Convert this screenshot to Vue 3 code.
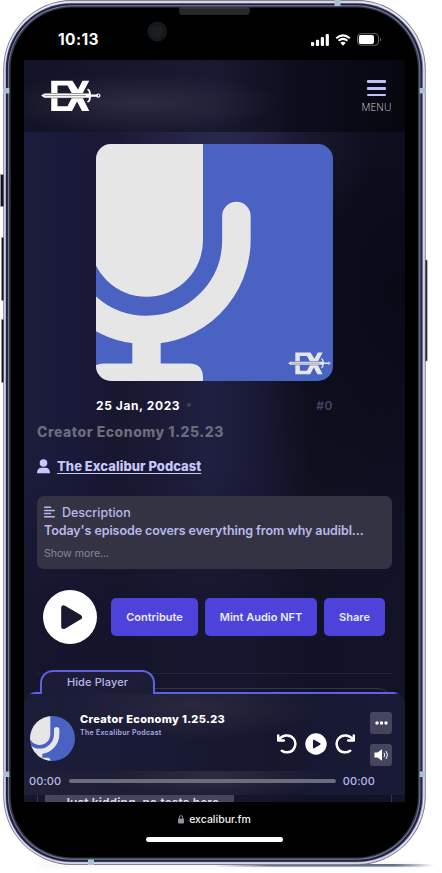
<script setup>
import { h } from 'vue'

const actions = ['Contribute', 'Mint Audio NFT', 'Share']

// Brand mark: block letters crossed by a sword
const BrandMark = () =>
  h('svg', { viewBox: '0 0 60 32' }, [
    h('path', { fill: 'currentColor', d: 'M10.200.7H31.500L37 9.500 41.500.7H48.300L40.500 15.600 48.300 30.900H41L36 21.500 31 30.900H10.200ZM16.500 5.500V26.200H26.500L32 15.600 26.500 5.500Z', 'fill-rule': 'evenodd' }),
    h('path', { class: 'blade', d: 'M0 15.6 4 12.900H43V18.300H4Z' }),
    h('path', { fill: 'currentColor', d: 'M0 15.600 3.500 13.500H50V14.500H57V16.700H50V17.700H3.500Z' }),
    h('path', { class: 'groove', d: 'M4 15.6H45' }),
    h('path', { fill: 'none', stroke: 'currentColor', 'stroke-width': 1.8, d: 'M46.500 9.200Q50 11 48.200 15.6 50 20.2 46.500 22' }),
    h('circle', { cx: 57.3, cy: 15.6, r: 1.6, fill: 'none', stroke: 'currentColor', 'stroke-width': 1.2 }),
  ])

const CoverArt = () =>
  h('svg', { viewBox: '0 0 237 237' }, [
    h('rect', { width: 237, height: 237, fill: '#4a62c2' }),
    h('path', { fill: '#e6e6e6', d: 'M-6-5H107V96.300A56.500 56.500 0 0 1-6 96.300Z' }),
    h('path', { fill: 'none', stroke: '#e6e6e6', 'stroke-width': 28.5, 'stroke-linecap': 'round', d: 'M140.4 72V96A90 90 0 0 1-39.6 96' }),
    h('path', { fill: '#e6e6e6', d: 'M36.3 195H64.7V219.6H93.3Q107 219.6 107 234V240H-6V234Q-6 219.6 8 219.6H36.3Z' }),
  ])
</script>

<template>
  <main class="stage">
    <svg class="chassis" viewBox="0 0 442 873" aria-hidden="true">
      <defs>
        <linearGradient id="ground"><stop offset="0" stop-color="#65708b" stop-opacity="0" /><stop offset=".25" stop-color="#65708b" /><stop offset=".82" stop-color="#65708b" /><stop offset="1" stop-color="#65708b" stop-opacity="0" /></linearGradient>
        <filter id="soft" x="-10%" y="-300%" width="120%" height="700%"><feGaussianBlur stdDeviation=".7" /></filter>
        <filter id="softer" x="-10%" y="-300%" width="120%" height="700%"><feGaussianBlur stdDeviation="2.5" /></filter>
      </defs>
      <rect x="40" y="864" width="380" height="2" fill="#c8cad2" opacity=".5" filter="url(#softer)" />
      <rect x="215" y="864" width="219" height="2.6" fill="url(#ground)" filter="url(#soft)" />
      <g fill="#101519" stroke="#9fa6b0" stroke-width=".7">
        <rect x=".4" y="174.500" width="5" height="32" />
        <rect x="1.400" y="237.500" width="4" height="63" />
        <rect x="1.400" y="319.500" width="4" height="63" />
        <rect x="423" y="260" width="4.200" height="101" />
      </g>
      <rect x="3.300" y="0" width="422.400" height="865" rx="69" fill="#6d6a80" />
      <rect x="4" y=".8" width="421" height="863.500" rx="68" fill="#c3bfcb" />
      <rect x="4.600" y="1.400" width="419.600" height="862" rx="67" fill="#eeeef4" />
      <rect x="5.300" y="2.800" width="418" height="859.800" rx="66.500" fill="#9794a8" />
      <rect x="6" y="3.500" width="416.300" height="858.300" rx="65.500" fill="#201e4c" />
      <rect x="7.900" y="5.200" width="412.500" height="854.600" rx="64" fill="#74839a" />
      <rect x="8.900" y="6.200" width="410.500" height="852.600" rx="63" fill="#343b40" />
      <rect x="10.600" y="7.600" width="407.300" height="849.800" rx="61.500" fill="#000" />
      <path fill="#a9c0d5" d="M3.300 88h6v5.500h-6zM419.700 88h6v5.500h-6zM3.300 771.500h6v5.500h-6zM419.700 771.500h6v5.500h-6zM334.500 0h6v6h-6zM88 859.500h6v5.500h-6z" />
      <path d="M179 7H250V11Q250 15 246 15H183Q179 15 179 11Z" fill="#262929" />
      <path d="M181 8H248" stroke="#414545" />
      <circle cx="157.300" cy="31.500" r="10" fill="#15181b" /><circle cx="157.300" cy="31.500" r="6.500" fill="#1a1e21" />
    </svg>

    <div class="device">
      <div class="status">
        <span class="clock">10:13</span>
        <div class="signals">
          <svg width="18" height="12" viewBox="0 0 18 12" fill="#fff"><rect y="8" width="3.200" height="4" rx="1" /><rect x="4.900" y="5.800" width="3.200" height="6.200" rx="1" /><rect x="9.800" y="3" width="3.200" height="9" rx="1" /><rect x="14.700" width="3.200" height="12" rx="1" /></svg>
          <svg width="16" height="12" viewBox="0 0 16 12"><path d="M1.200 4.200Q8-1.500 14.800 4.200M3.500 6.800Q8 3 12.500 6.800" fill="none" stroke="#fff" stroke-width="2" /><path d="M5.300 8.800Q8 6.600 10.700 8.800L8 11.700Z" fill="#fff" /></svg>
          <svg width="25" height="13" viewBox="0 0 25 13"><rect x=".5" y=".7" width="21" height="11.500" rx="3.300" fill="none" stroke="#68686a" /><rect x="1.800" y="2" width="15.200" height="8.900" rx="2" fill="#fff" /><path d="M23 4.400Q25.300 6.400 23 8.500Z" fill="#68686a" /></svg>
        </div>
      </div>

      <section class="screen">
        <header class="topbar">
          <BrandMark class="brand" />
          <button class="menu"><i></i><i></i><i></i><span>MENU</span></button>
        </header>

        <article class="episode">
          <div class="cover"><CoverArt class="art" /><BrandMark class="stamp" /></div>
          <div class="meta"><b>25 Jan, 2023</b><i class="dot"></i><span class="num">#0</span></div>
          <h1>Creator Economy 1.25.23</h1>
          <div class="author">
            <svg width="13" height="15" viewBox="0 0 13 15" fill="#c7c9fb"><circle cx="6.500" cy="4" r="3.800" /><path d="M0 14.300Q0 8.700 4.500 8.700H8.500Q13 8.700 13 14.300Z" /></svg>
            <a>The Excalibur Podcast</a>
          </div>
          <div class="description">
            <div class="label">
              <svg width="11" height="12" viewBox="0 0 11 12"><path d="M.7 1.200H6.500M.7 4.400H10.300M.7 7.600H6.500M.7 10.800H10.300" stroke="#b9bae8" stroke-width="1.500" stroke-linecap="round" /></svg>
              <span>Description</span>
            </div>
            <p>Today's episode covers everything from why audibl...</p>
            <small>Show more...</small>
          </div>
          <div class="actions">
            <svg class="play" viewBox="0 0 54 54"><circle cx="27" cy="27" r="27" fill="#fff" /><path d="M20.700 17.800V36.600L36.500 27.200Z" fill="#181831" stroke="#181831" stroke-width="5" stroke-linejoin="round" /></svg>
            <button v-for="label in actions" :key="label">{{ label }}</button>
          </div>
          <hr />
          <div class="notes"><p>Just kidding, no tests here</p></div>
        </article>

        <aside class="player">
          <button class="hide">Hide Player</button>
          <div class="panel">
            <CoverArt class="thumb" />
            <div class="track"><strong>Creator Economy 1.25.23</strong><span>The Excalibur Podcast</span></div>
            <div class="controls">
              <svg width="20" height="20" viewBox="0 0 20 20"><path d="M1.200 1.500V6.500H6.800M2 6C5 .8 12.500-.2 16.500 4.500 20.300 9 18 17.300 11 18.300 8.500 18.600 6.300 17.800 4.800 16.700" /></svg>
              <svg width="22" height="22" viewBox="0 0 22 22"><circle cx="11" cy="11" r="10.700" fill="#fff" stroke="none" /><path class="tri" d="M8.800 7.300V14.700L14.800 11Z" /></svg>
              <svg width="20" height="20" viewBox="0 0 20 20"><path d="M18.800 1.500V6.500H13.200M18 6C15 .8 7.500-.2 3.500 4.500-.3 9 2 17.300 9 18.300 11.500 18.600 13.700 17.800 15.200 16.700" /></svg>
            </div>
            <div class="extras">
              <button><svg width="13" height="4" viewBox="0 0 13 4" fill="#fff"><circle cx="2" cy="2" r="1.700" /><circle cx="6.500" cy="2" r="1.700" /><circle cx="11" cy="2" r="1.700" /></svg></button>
              <button><svg width="15" height="12" viewBox="0 0 15 12"><path d="M.5 3.500H3.500L8 .3V11.700L3.500 8.500H.5Z" fill="#fff" /><path d="M10 3.800Q11.500 6 10 8.200M12 2Q15 6 12 10" fill="none" stroke="#fff" /></svg></button>
            </div>
          </div>
          <div class="progress"><span>00:00</span><div class="rail"></div><span>00:00</span></div>
        </aside>
      </section>

      <footer class="address">
        <div class="site"><svg width="6" height="9" viewBox="0 0 6 9"><rect y="3.500" width="6" height="5" rx="1" fill="#929294" /><path d="M1.300 4V2.300Q1.300.7 3 .7T4.700 2.300V4" fill="none" stroke="#929294" /></svg><span>excalibur.fm</span></div>
        <div class="home"></div>
      </footer>
    </div>
  </main>
</template>

<style>
body { background: #fff; }
</style>

<style scoped>
* { box-sizing: border-box; }
.stage { position: relative; width: 442px; height: 873px; overflow: hidden; background: #fff; font-family: Inter, "Liberation Sans", sans-serif; color: #fff; }
.chassis { position: absolute; inset: 0; width: 442px; height: 873px; }
.device { position: relative; width: 381px; margin-left: 24px; display: flex; flex-direction: column; }
button { font-family: inherit; border: 0; padding: 0; color: inherit; }
svg { display: block; flex: none; }

.status { height: 60px; padding: 19px 23px 0 34px; display: flex; align-items: center; justify-content: space-between; }
.clock { font-size: 15.500px; font-weight: 700; letter-spacing: .4px; }
.signals { display: flex; align-items: center; gap: 6px; }

.screen { position: relative; height: 742px; overflow: hidden; background: radial-gradient(ellipse 150px 130px at 205px 70px, rgba(48, 46, 90, .6), rgba(34, 32, 68, 0)), linear-gradient(180deg, rgba(19, 19, 42, 0) 55%, rgba(19, 19, 40, .75) 75%), radial-gradient(ellipse 150px 300px at 375px 230px, rgba(7, 9, 20, .9), rgba(7, 9, 20, 0)), linear-gradient(90deg, #1c1c3b 0, #19193a 12%, #17172f 25%, #1f1f40 48%, #1a1a38 60%, #101120 75%, #111328 100%); }
.topbar { height: 72px; padding: 0 13px 0 17px; display: flex; align-items: flex-start; justify-content: space-between; background: radial-gradient(ellipse 145px 30px at 115px 43px, rgba(56, 54, 72, .65), transparent), linear-gradient(90deg, #131327, #191932 50%, #0d0e1d 70%, #070710); }
.brand { width: 60px; height: 32px; margin-top: 20px; color: #fff; }
:deep(.blade) { fill: #343448; }
:deep(.groove) { stroke: #676776; stroke-width: .7; fill: none; }
.menu { margin-top: 20px; width: 31px; display: flex; flex-direction: column; align-items: center; gap: 4px; background: none; }
.menu i { width: 19px; height: 2.800px; border-radius: 1px; background: #bdc0fb; }
.menu span { font-family: "Open Sans", sans-serif; font-size: 10.300px; font-weight: 300; line-height: 13px; color: #d4d4df; letter-spacing: .2px; margin-top: 1px; }

.episode { padding: 12px 13px 0; }
.cover { position: relative; width: 237px; height: 237px; margin-left: 59px; border-radius: 15px; overflow: hidden; }
.art { width: 237px; height: 237px; }
.stamp { position: absolute; width: 43px; height: 23px; right: 2px; bottom: 6px; color: #e6e6e6; }
.stamp :deep(.blade) { fill: #4a62c2; }
.meta { width: 237px; height: 16px; margin: 16px 0 0 59px; display: flex; align-items: center; font-size: 12px; }
.meta b { font-weight: 700; letter-spacing: .6px; }
.dot { width: 4px; height: 4px; margin-left: 7px; border-radius: 50%; background: #40405a; }
.num { margin-left: auto; font-weight: 600; letter-spacing: .6px; color: #45436a; }
h1 { margin: 9px 0 0; height: 20px; font-size: 14px; line-height: 20px; font-weight: 800; letter-spacing: .52px; color: #6b6c7b; white-space: nowrap; }
.author { height: 20px; margin-top: 14px; display: flex; align-items: center; gap: 7px; }
.author a { font-size: 13px; font-weight: 800; letter-spacing: .04px; color: #c7c9fb; text-decoration: underline; text-underline-offset: 2px; }
.description { height: 73px; margin-top: 20px; padding: 8px 7px; border-radius: 7px; background: #333344; color: #b9bae8; white-space: nowrap; }
.label { height: 16px; display: flex; align-items: center; gap: 7px; font-size: 12.500px; font-weight: 500; }
.description p { margin: 2px 0 0; font-size: 12.500px; line-height: 17px; font-weight: 600; letter-spacing: -.08px; }
.description small { display: block; margin-top: 8px; font-size: 10.700px; line-height: 14px; letter-spacing: -.1px; color: #85859f; }
.actions { height: 54px; margin-top: 21px; padding: 0 7px 0 6px; display: flex; align-items: center; gap: 7px; }
.play { width: 54px; height: 54px; margin-right: 7px; }
.actions button { height: 38px; padding: 0; border-radius: 5px; background: #4d43da; color: #ebeaff; font-size: 11px; font-weight: 600; white-space: nowrap; }
.actions button:nth-of-type(1) { width: 87px; }
.actions button:nth-of-type(2) { width: 112px; }
.actions button:nth-of-type(3) { width: 61px; }
hr { height: 1px; border: 0; margin: 29px 0 14px; background: #25253a; }
.notes { height: 180px; padding-top: 102px; border: 1px solid #34344a; border-radius: 14px; }
.notes p { width: 189px; height: 30px; margin: 0 0 0 7px; padding: 4px 0 0 18px; background: #45465e; color: #ddddf2; font-size: 12px; line-height: 15px; font-weight: 600; letter-spacing: .12px; white-space: nowrap; }

.player { position: absolute; left: 0; right: 0; bottom: 7px; height: 125px; display: flex; flex-direction: column; }
.hide { position: relative; z-index: 1; width: 115px; height: 24px; margin-left: 16px; padding-bottom: 2px; border: solid #5b63e3; border-width: 2px 2px 0; border-radius: 13px 13px 0 0; background: #1c1c36; color: #b9bae8; font-size: 11px; font-weight: 500; letter-spacing: .12px; }
.panel { position: relative; height: 79px; margin-top: -2px; padding: 2px 13px 0 6px; display: flex; align-items: flex-start; border-radius: 12px 12px 0 0; background: linear-gradient(90deg, transparent 4px, #5b63e3 8px, #5b63e3 371px, transparent 376px) top / 100% 2px no-repeat, radial-gradient(ellipse 130px 35px at 170px 14px, rgba(51, 48, 70, .65), transparent), linear-gradient(90deg, #1c1d39, #16172e 65%, #191a37); }
.thumb { width: 45px; height: 45px; margin-top: 22px; border-radius: 50%; }
.track { width: 147px; margin: 18px 0 0 5px; display: flex; flex-direction: column; white-space: nowrap; }
.track strong { font-size: 11px; line-height: 15px; font-weight: 800; letter-spacing: .33px; }
.track span { font-size: 7px; line-height: 11px; font-weight: 600; color: #acaee3; letter-spacing: .29px; }
.controls { margin: 39px 0 0 50px; display: flex; align-items: center; gap: 8px; }
.controls path { fill: none; stroke: #fff; stroke-width: 2.500; stroke-linecap: round; stroke-linejoin: round; }
.controls .tri { fill: #1c1c37; stroke: #1c1c37; stroke-width: 1.500; }
.extras { margin: 18px 0 0 auto; display: flex; flex-direction: column; gap: 10px; }
.extras button { width: 22px; height: 22px; display: grid; place-items: center; background: #45465e; border-radius: 3px; }
.progress { height: 24px; padding: 0 30px 4px 5px; display: flex; align-items: center; justify-content: space-between; background: radial-gradient(ellipse 110px 25px at 190px 5px, rgba(55, 54, 72, .65), transparent), linear-gradient(90deg, #202139, #171831 65%, #191a38); font-size: 11px; font-weight: 500; letter-spacing: .1px; color: #b9bae8; }
.rail { width: 267px; height: 4px; border-radius: 2px; background: #6b6c7c; }
.address { height: 55px; display: flex; flex-direction: column; align-items: center; }
.site { height: 14px; margin-top: 10px; display: flex; align-items: center; gap: 5px; font-size: 10.500px; font-weight: 500; color: #f0f0f2; }
.home { width: 137px; height: 4.500px; margin-top: 11px; border-radius: 3px; background: #fff; }
</style>
